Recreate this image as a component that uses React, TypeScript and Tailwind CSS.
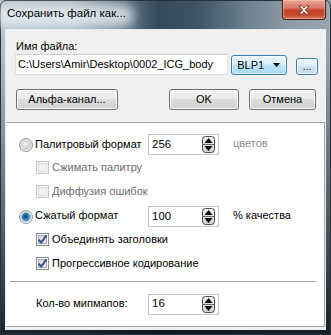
import React, { useId } from "react";

function SpinIcon() {
  const id = useId();
  return (
    <svg width="13" height="17" viewBox="0 0 13 17">
      <defs>
        <linearGradient id={id} x1="0" y1="0" x2="0" y2="1">
          <stop offset="0" stopColor="#f4f4f4" />
          <stop offset="0.5" stopColor="#e2e2e2" />
          <stop offset="1" stopColor="#cfcfcf" />
        </linearGradient>
      </defs>
      <rect x="0.5" y="0.5" width="12" height="16" rx="3" fill={`url(#${id})`} stroke="#4a4a4a" />
      <line x1="1" y1="8.5" x2="12" y2="8.5" stroke="#6a6a6a" />
      <path d="M6.5 2 L10.5 7 H2.5 Z" fill="#000" />
      <path d="M2.5 10 H10.5 L6.5 15 Z" fill="#000" />
    </svg>
  );
}

function Spinner({ value }: { value: string }) {
  return (
    <div className="w-[71px] h-[21px] bg-white border border-[#c4c4c4] flex items-center pl-[3px] pr-[3px] text-[11.5px] text-black">
      <span className="flex-1 leading-none">{value}</span>
      <SpinIcon />
    </div>
  );
}

function CheckBox({ checked, disabled }: { checked?: boolean; disabled?: boolean }) {
  const id = useId();
  return (
    <svg width="13" height="13" viewBox="0 0 13 13" className="shrink-0">
      <defs>
        <linearGradient id={id} x1="0" y1="0" x2="1" y2="1">
          <stop offset="0" stopColor={disabled ? "#ececec" : "#cbcfd5"} />
          <stop offset="1" stopColor={disabled ? "#f7f7f7" : "#f6f6f6"} />
        </linearGradient>
      </defs>
      <rect x="0.5" y="0.5" width="12" height="12" fill="#f4f4f4" stroke={disabled ? "#c6c6c6" : "#8e8f8f"} />
      <rect x="2.5" y="2.5" width="8" height="8" fill={`url(#${id})`} stroke={disabled ? "#e0e0e0" : "#aeb3b9"} />
      {checked && (
        <path d="M2.6 6.6 L5.2 9.6 L10.4 2.4" stroke="#3b4f8f" strokeWidth="2" fill="none" strokeLinejoin="round" />
      )}
    </svg>
  );
}

function Radio({ checked }: { checked?: boolean }) {
  const id = useId();
  return (
    <svg width="14" height="14" viewBox="0 0 14 14" className="shrink-0">
      <defs>
        <linearGradient id={id + "o"} x1="0" y1="0" x2="1" y2="1">
          <stop offset="0" stopColor="#e6e6e6" />
          <stop offset="1" stopColor="#fbfbfb" />
        </linearGradient>
        <radialGradient id={id + "u"} cx="0.35" cy="0.35" r="0.8">
          <stop offset="0" stopColor="#f4f4f4" />
          <stop offset="1" stopColor="#c3c6ca" />
        </radialGradient>
        <radialGradient id={id + "c"} cx="0.45" cy="0.45" r="0.6">
          <stop offset="0" stopColor="#0c3a6a" />
          <stop offset="0.45" stopColor="#1d6fae" />
          <stop offset="1" stopColor="#86d1f3" />
        </radialGradient>
      </defs>
      <circle cx="7" cy="7" r="6.4" fill={`url(#${id}o)`} stroke="#8e8f8f" />
      <circle cx="7" cy="7" r="4.2" fill={checked ? `url(#${id}c)` : `url(#${id}u)`} stroke={checked ? "#2a6aa0" : "#b0b3b7"} strokeWidth="0.6" />
    </svg>
  );
}

function WinButton({ label, w }: { label: string; w: string }) {
  return (
    <div
      className={`${w} h-[21px] rounded-[3px] border border-[#707070] bg-[linear-gradient(to_bottom,#f2f2f2_0%,#ebebeb_45%,#dddddd_50%,#cfcfcf_100%)] shadow-[inset_0_0_0_1px_#fbfbfb] flex items-center justify-center text-[11px] text-black`}
    >
      {label}
    </div>
  );
}

export default function App() {
  return (
    <div className="w-[331px] h-[335px] relative overflow-hidden font-['Liberation_Sans',Arial,sans-serif] bg-[linear-gradient(to_right,#b3c1cb_0%,#a7b6c1_22%,#5d7384_38%,#34495a_48%,#3f5566_60%,#6e8290_75%,#8e9da8_88%,#97a5af_100%)]">
      <div className="absolute inset-0 bg-[linear-gradient(to_bottom,rgba(0,0,0,0)_0%,rgba(0,0,0,0)_15%,rgba(15,25,33,0.6)_70%,rgba(10,18,24,0.9)_100%)]" />
      <div className="absolute inset-0 border border-[#25323b] rounded-t-[6px]" />
      <div className="absolute left-[-6px] top-[5px] w-[140px] h-[22px] rounded-full bg-[#eef3f6] opacity-80 blur-[6px]" />

      <div className="relative flex flex-col h-full">
        <div className="h-[29px] flex items-center pl-[7px] pb-[2px] text-[11.5px] text-black">
          Сохранить файл как...
        </div>
        <div className="absolute right-[5px] top-0 w-[44px] h-[20px] rounded-b-[4px] border border-t-0 border-[#4a1a12] bg-[linear-gradient(to_bottom,#e8a698_0%,#d97a68_40%,#c2412a_55%,#c84a30_80%,#e07a55_100%)] shadow-[inset_0_0_0_1px_rgba(255,220,210,0.45)] flex items-center justify-center">
          <svg width="12" height="10" viewBox="0 0 12 10">
            <path
              d="M0.8 0.8 H3.6 L6 3.2 L8.4 0.8 H11.2 L7.4 5 L11.2 9.2 H8.4 L6 6.8 L3.6 9.2 H0.8 L4.6 5 Z"
              fill="#ffffff"
              stroke="#5a2418"
              strokeWidth="0.8"
              strokeLinejoin="round"
            />
          </svg>
        </div>

        <div className="mx-[5px] h-[301px] bg-[#f0f0f0] border-t border-l border-[#e4ebf0] flex flex-col text-[11px] text-black">
          <div className="h-[92px] pl-[9px] pr-[8px] flex flex-col">
            <div className="mt-[10px] h-[13px] leading-[13px] pl-[1px]">Имя файла:</div>
            <div className="mt-[1px] flex items-start">
              <div className="w-[214px] h-[21px] bg-white border border-[#dde2e8] border-t-[#c9ced6] flex items-center pl-[2px] text-[11px] leading-none">
                C:\Users\Amir\Desktop\0002_ICG_body
              </div>
              <div className="ml-[3px] mt-[1px] w-[56px] h-[20px] rounded-[3px] border border-[#3c7fb1] bg-[linear-gradient(to_bottom,#eaf6fd_0%,#d9f0fc_45%,#bee6fd_50%,#a7d9f5_100%)] shadow-[inset_0_0_0_1px_rgba(255,255,255,0.6)] flex items-center pl-[5px] pr-[6px] text-[11px]">
                <span className="flex-1 leading-none">BLP1</span>
                <svg width="7" height="4" viewBox="0 0 7 4">
                  <path d="M0 0 H7 L3.5 4 Z" fill="#000" />
                </svg>
              </div>
              <div className="ml-[9px] mt-[4px] w-[22px] h-[17px] rounded-[3px] border border-[#3c7fb1] bg-[linear-gradient(to_bottom,#eef6fb_0%,#e0eef7_45%,#cfe4f1_50%,#c4ddee_100%)] shadow-[inset_0_0_0_1px_rgba(255,255,255,0.7)] flex items-end justify-center pb-[2px] text-[10px] leading-none">
                ...
              </div>
            </div>
            <div className="mt-[14px] flex items-start">
              <div className="ml-[1px]">
                <WinButton label="Альфа-канал..." w="w-[102px]" />
              </div>
              <div className="ml-[51px]">
                <WinButton label="OK" w="w-[70px]" />
              </div>
              <div className="ml-[10px]">
                <WinButton label="Отмена" w="w-[67px]" />
              </div>
            </div>
          </div>

          <div className="w-[319px] h-[205px] bg-white border-t border-r border-b border-[#a0a0a0] flex flex-col">
            <div className="mt-[11px] h-[21px] flex items-center">
              <div className="w-[13px]" />
              <Radio />
              <span className="ml-[2px] w-[113px]">Палитровый формат</span>
              <Spinner value="256" />
              <span className="ml-[14px] text-[#8c8c8c] -mt-[3px]">цветов</span>
            </div>
            <div className="h-[24px] flex items-center pl-[30px]">
              <CheckBox disabled />
              <span className="ml-[3px] text-[#6d6d6d]">Сжимать палитру</span>
            </div>
            <div className="h-[25px] flex items-center pl-[30px]">
              <CheckBox disabled />
              <span className="ml-[3px] text-[#6d6d6d]">Диффузия ошибок</span>
            </div>
            <div className="mt-[2px] h-[21px] flex items-center">
              <div className="w-[13px]" />
              <Radio checked />
              <span className="ml-[2px] w-[113px] -mt-[2px]">Сжатый формат</span>
              <Spinner value="100" />
              <span className="ml-[14px] -mt-[3px]">% качества</span>
            </div>
            <div className="h-[24px] flex items-center pl-[30px]">
              <CheckBox checked />
              <span className="ml-[3px]">Объединять заголовки</span>
            </div>
            <div className="h-[24px] flex items-center pl-[30px]">
              <CheckBox checked />
              <span className="ml-[3px]">Прогрессивное кодирование</span>
            </div>
            <div className="mt-[6px] ml-[4px] w-[306px] h-px bg-[#a0a0a0]" />
            <div className="mt-[11px] h-[22px] flex items-center">
              <span className="ml-[30px] w-[112px] -mt-[2px]">Кол-во мипмапов:</span>
              <Spinner value="16" />
            </div>
          </div>
        </div>
      </div>
    </div>
  );
}
